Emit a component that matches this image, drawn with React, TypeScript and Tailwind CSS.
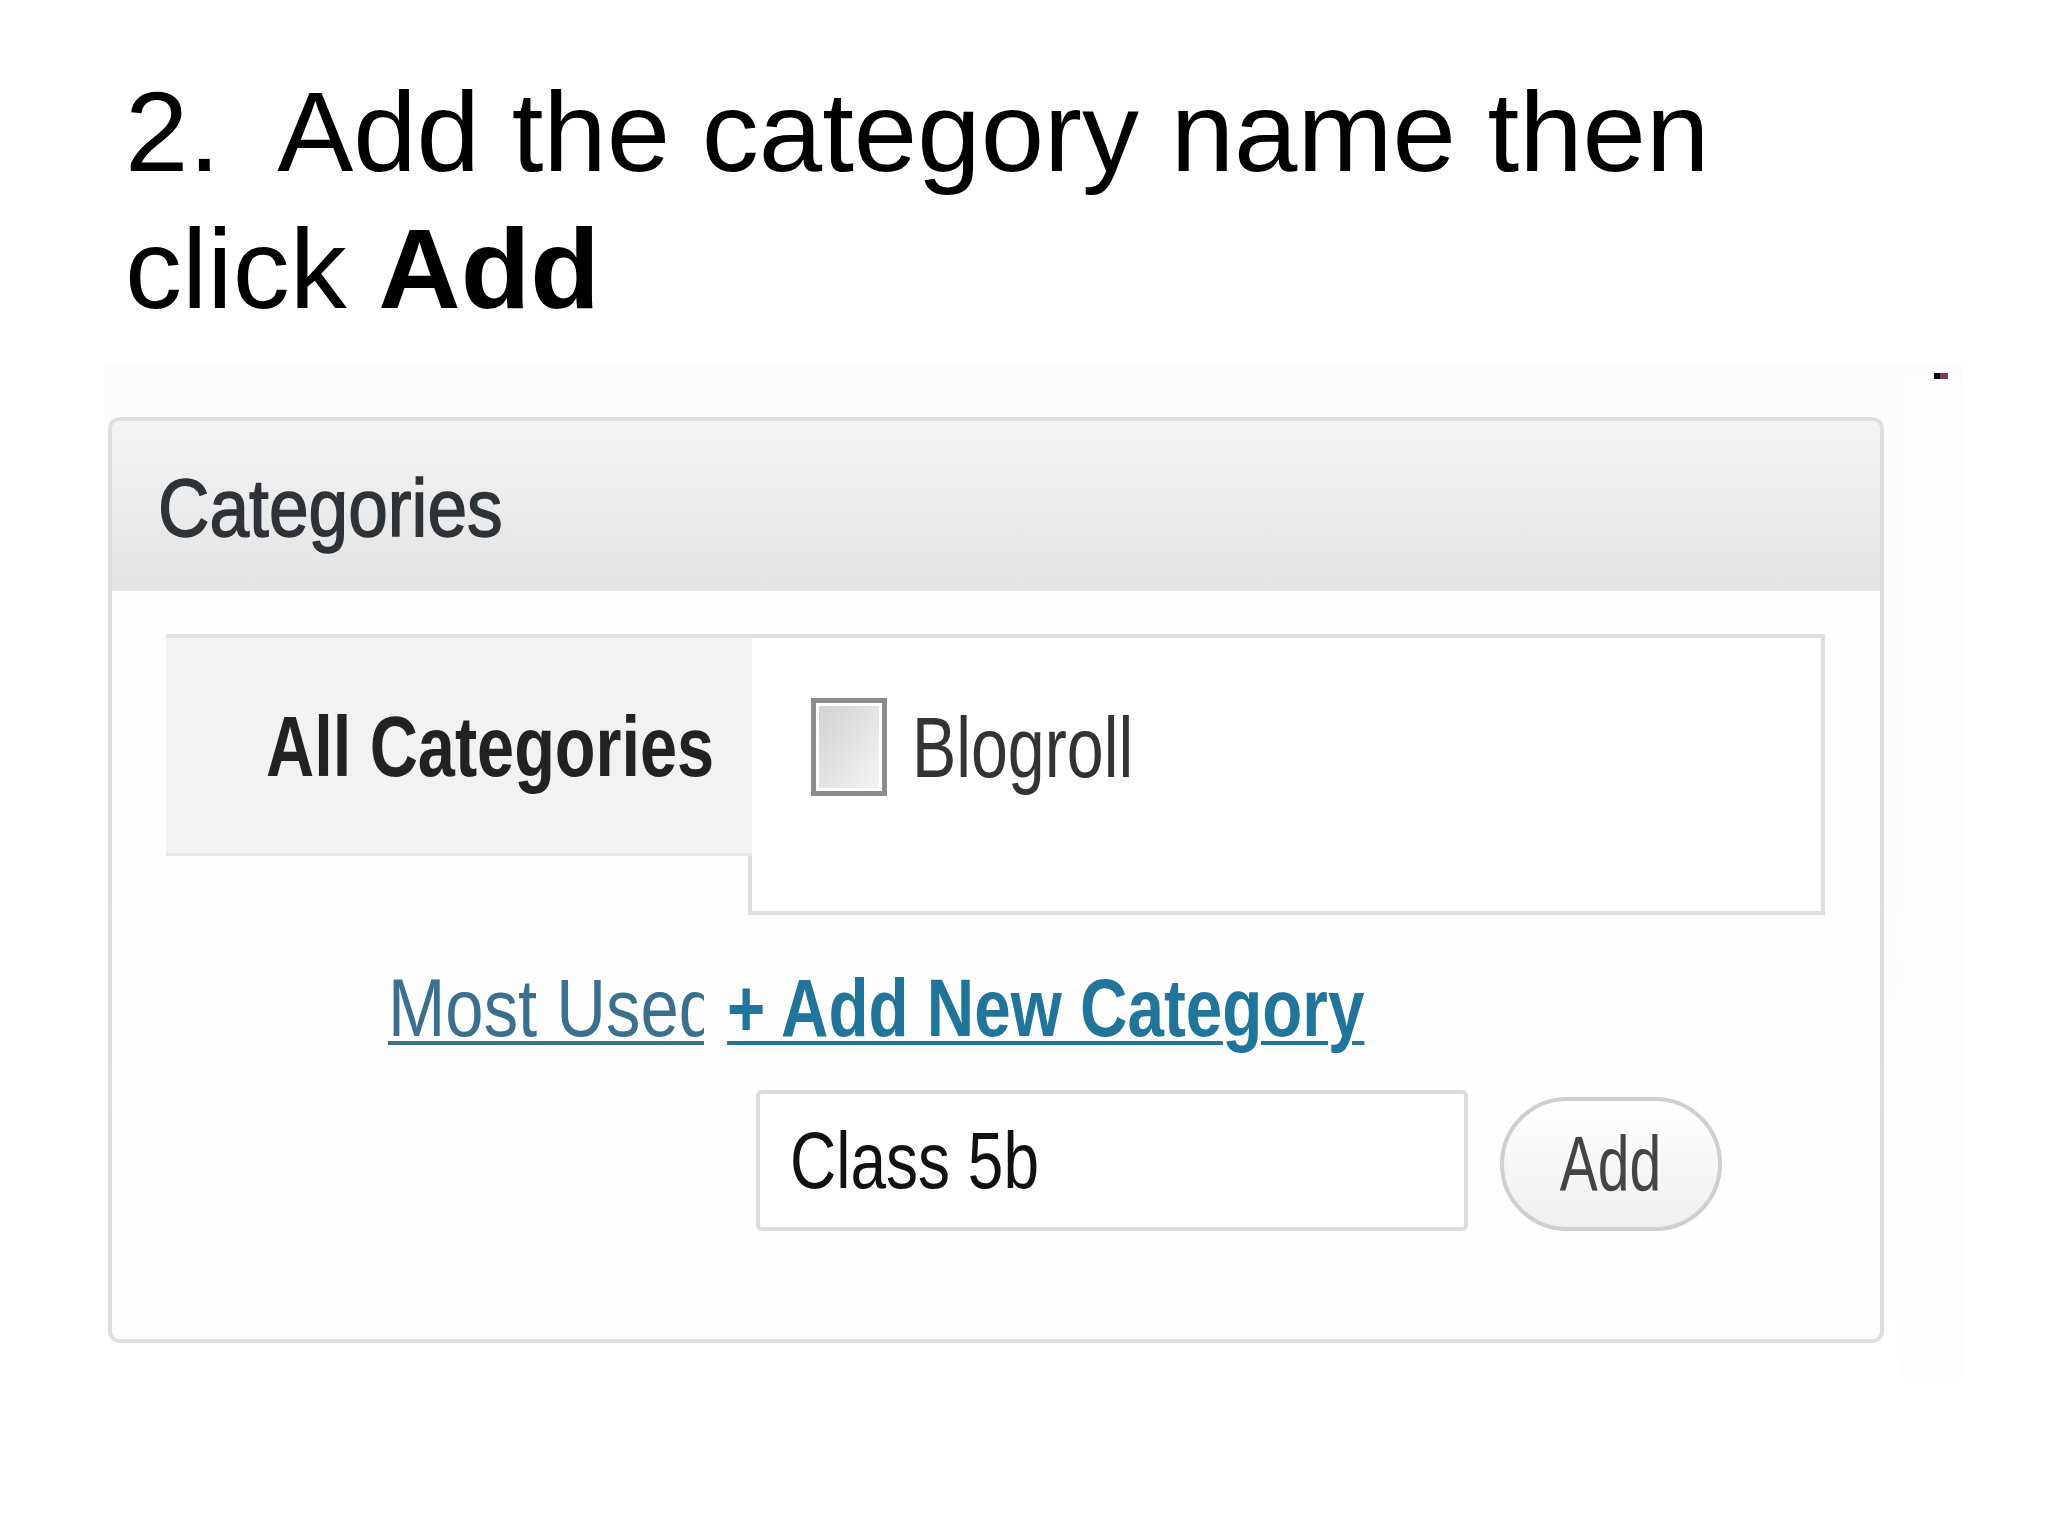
export default function App() {
  return (
    <div className="w-[2048px] h-[1536px] bg-white overflow-hidden font-['Liberation_Sans',Arial,sans-serif]">
      {/* Slide title */}
      <h1 className="pl-[125px] pt-[63px] text-[114px] leading-[137px] text-black font-normal whitespace-pre">
        {"2.  Add the category name then\nclick "}
        <b className="font-bold">Add</b>
      </h1>

      {/* Screenshot area */}
      <div className="relative mt-[25px] ml-[104px] w-[1858px] h-[1030px] bg-gradient-to-b from-[#fcfcfc] via-[#fcfcfd] to-white pt-[55px] pl-[4px]">
        <div className="absolute left-[1830px] top-[11px] flex h-[6px] w-[14px]">
          <div className="w-[6px] bg-black" />
          <div className="w-[8px] bg-[#7b3b5b]" />
        </div>
        <div className="absolute right-0 top-[20px] h-[1000px] w-[60px] bg-[#fefcfe]" />

        {/* WordPress Categories box */}
        <div className="relative w-[1776px] h-[926px] rounded-[12px] border-[4px] border-[#dedede] bg-[#fefefe] overflow-hidden flex flex-col">
          <div className="h-[170px] shrink-0 flex items-center pl-[46px] pt-[8px] bg-gradient-to-b from-[#f3f3f3] via-[#ececec] to-[#e4e4e4] border-b-[3px] border-[#e6e6e6]">
            <span className="inline-block origin-left scale-x-[0.88] whitespace-nowrap text-[81px] leading-none text-[#2e3338] [-webkit-text-stroke:1.5px_#2e3338]">
              Categories
            </span>
          </div>

          <div className="pt-[43px] pl-[54px] flex flex-col">
            {/* Tabs + list */}
            <div className="flex items-start">
              <div className="relative z-10 -mr-[4px] w-[586px] h-[222px] flex items-center pl-[100px] bg-[#f2f1f3] border-t-[4px] border-[#e0e0e0] border-b-[3px] border-b-[#e6e5e8]">
                <span className="inline-block origin-left scale-x-[0.775] whitespace-nowrap text-[86px] leading-none font-bold text-[#222]">
                  All Categories
                </span>
              </div>
              <div className="w-[1077px] h-[281px] border-[4px] border-[#dedede] bg-white pt-[60px] pl-[59px]">
                <div className="flex items-center">
                  <div className="w-[76px] h-[98px] border-[5px] border-[#8c8c8c] bg-white p-[3px]">
                    <div className="w-full h-full bg-gradient-to-br from-[#d2d2d2] to-[#f4f4f4]" />
                  </div>
                  <span className="ml-[25px] inline-block origin-left scale-x-[0.78] whitespace-nowrap text-[85px] leading-none text-[#333]">
                    Blogroll
                  </span>
                </div>
              </div>
            </div>

            {/* Tab links */}
            <div className="mt-[43px] pl-[222px] flex items-start h-[100px] text-[81px] leading-[100px]">
              <div className="w-[316px] h-[100px] overflow-hidden">
                <span className="inline-block origin-left scale-x-[0.85] whitespace-nowrap text-[#3a6f8d] underline decoration-[4px] underline-offset-[5px]">
                  Most Used
                </span>
              </div>
              <div className="ml-[23px]">
                <span className="inline-block origin-left scale-x-[0.81] whitespace-nowrap font-bold text-[#21759b] underline decoration-[4px] underline-offset-[5px]">
                  + Add New Category
                </span>
              </div>
            </div>

            {/* New category input */}
            <div className="mt-[32px] pl-[590px] flex items-end">
              <div className="w-[712px] h-[141px] rounded-[6px] border-[4px] border-[#dcdcdc] bg-white flex items-center pl-[30px]">
                <span className="inline-block origin-left scale-x-[0.8] whitespace-nowrap text-[80px] leading-none text-[#111]">
                  Class 5b
                </span>
              </div>
              <div className="ml-[32px] w-[222px] h-[134px] rounded-full border-[4px] border-[#cfcfcf] bg-gradient-to-b from-white to-[#efefef] flex items-center justify-center">
                <span className="inline-block scale-x-[0.74] whitespace-nowrap text-[77px] leading-none text-[#444]">
                  Add
                </span>
              </div>
            </div>
          </div>
        </div>
      </div>
    </div>
  );
}
